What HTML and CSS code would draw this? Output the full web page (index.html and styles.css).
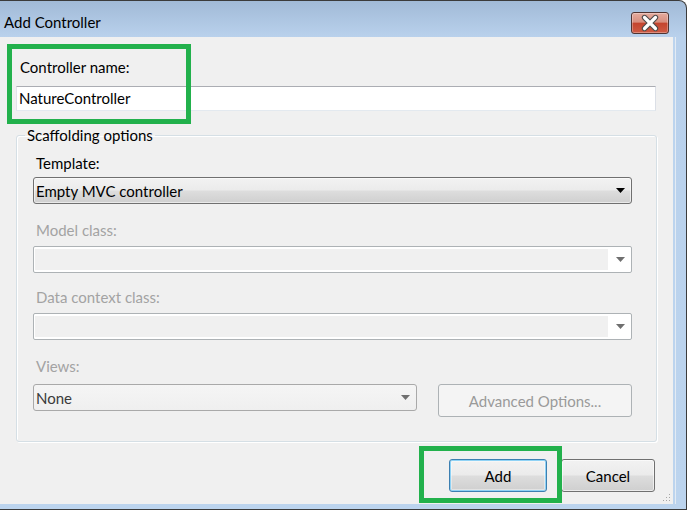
FILE: index.html
```html
<!DOCTYPE html>
<html lang="en">
<head>
<meta charset="utf-8">
<title>Add Controller</title>
<link rel="stylesheet" href="styles.css">
</head>
<body>
<div class="window">
  <div class="titlebar">
    <span class="title">Add Controller</span>
    <div class="close" role="button" aria-label="Close">
      <svg width="36" height="20" viewBox="0 0 36 20">
        <path d="M12.5 4.5 L23.5 15.5 M23.5 4.5 L12.5 15.5" stroke="#4a4a4a" stroke-width="5.4" stroke-linecap="round" fill="none"/>
        <path d="M12.5 4.5 L23.5 15.5 M23.5 4.5 L12.5 15.5" stroke="#ffffff" stroke-width="3.2" stroke-linecap="round" fill="none"/>
      </svg>
    </div>
  </div>
  <div class="client">
    <div class="lbl name-lbl">Controller name:</div>
    <div class="textbox">NatureController</div>
    <fieldset class="group">
      <legend>Scaffolding options</legend>
      <div class="lbl first">Template:</div>
      <div class="combo active">
        <span class="val">Empty MVC controller</span>
        <svg class="arrow" width="9" height="5" viewBox="0 0 9 5"><path d="M0 0H9L4.5 5Z" fill="#000"/></svg>
      </div>
      <div class="lbl dis sec">Model class:</div>
      <div class="combo disabled">
        <span class="field"></span>
        <span class="dbtn"><svg width="9" height="5" viewBox="0 0 9 5"><path d="M0 0H9L4.5 5Z" fill="#6f6f6f"/></svg></span>
      </div>
      <div class="lbl dis third">Data context class:</div>
      <div class="combo disabled">
        <span class="field"></span>
        <span class="dbtn"><svg width="9" height="5" viewBox="0 0 9 5"><path d="M0 0H9L4.5 5Z" fill="#6f6f6f"/></svg></span>
      </div>
      <div class="lbl dis fourth">Views:</div>
      <div class="views-row">
        <div class="combo views">
          <span class="val">None</span>
          <svg class="arrow" width="9" height="5" viewBox="0 0 9 5"><path d="M0 0H9L4.5 5Z" fill="#6f6f6f"/></svg>
        </div>
        <div class="btn adv">Advanced Options...</div>
      </div>
    </fieldset>
    <div class="actions">
      <div class="btn default">Add</div>
      <div class="btn">Cancel</div>
    </div>
    <svg class="grip" width="10" height="10" viewBox="0 0 10 10">
      <rect x="8" y="2" width="1" height="1" fill="#a6a6a6"/>
      <rect x="5" y="5" width="1" height="1" fill="#a6a6a6"/>
      <rect x="8" y="5" width="1" height="1" fill="#a6a6a6"/>
      <rect x="2" y="8" width="1" height="1" fill="#a6a6a6"/>
      <rect x="5" y="8" width="1" height="1" fill="#a6a6a6"/>
      <rect x="8" y="8" width="1" height="1" fill="#a6a6a6"/>
    </svg>
  </div>
  <div class="mark mark-name"></div>
  <div class="mark mark-add"></div>
</div>
</body>
</html>
```
FILE: styles.css
```css
* { box-sizing: border-box; }
html, body { margin: 0; padding: 0; }
body {
  width: 687px;
  height: 510px;
  overflow: hidden;
  background: #ffffff;
  font-family: Lato, "Noto Sans", sans-serif;
  font-size: 15px;
  line-height: 18px;
  color: #000;
}
.window {
  position: relative;
  width: 687px;
  height: 510px;
  display: flex;
  flex-direction: column;
  background: linear-gradient(to bottom, #a1bad7 0px, #b9d1ec 36px, #bcd4ee 100%);
  border-top: 1px solid #3b3b3b;
  border-right: 1px solid #3b3b3b;
  border-bottom: 1px solid #3b3b3b;
  border-top-right-radius: 8px;
  padding: 0 13px 5px 0;
}
.titlebar {
  height: 36px;
  flex: none;
  display: flex;
  justify-content: space-between;
  align-items: flex-start;
  padding: 0 4px 0 4px;
}
.title {
  margin-top: 12px;
  color: #000;
}
.close {
  margin-top: 11px;
  width: 38px;
  height: 22px;
  border: 1px solid #4f3432;
  border-radius: 3px;
  background: linear-gradient(to bottom, #e4ab9e 0%, #d88e7e 45%, #c4452f 52%, #cf5b44 100%);
  box-shadow: inset 0 0 0 1px rgba(255, 255, 255, 0.3);
  display: flex;
  align-items: center;
  justify-content: center;
}
.close svg { display: block; }
.client {
  position: relative;
  flex: 1;
  background: #f0f0f0;
  padding: 21px 16px 0 16px;
  box-shadow: 2px 0 0 #bcd4ee, 3px 0 0 #e3ebf4;
}
.lbl { padding-left: 4px; }
.textbox {
  margin-top: 10px;
  width: 640px;
  height: 25px;
  border: 1px solid;
  border-color: #abadb3 #dbdfe6 #e3e9ef #e2e3ea;
  background: #fff;
  padding-left: 2px;
  line-height: 23px;
}
.group {
  margin: 15px 0 0 0;
  min-width: 0;
  border: 1px solid #d5dfe5;
  border-radius: 3px;
  box-shadow: inset 1px 1px 0 #fff, 1px 1px 0 #fff;
  padding: 0 16px 24px 16px;
}
.group legend {
  margin-left: -8px;
  padding: 0 2px;
}
.group .lbl { padding-left: 3px; }
.lbl.first { margin-top: 10px; margin-bottom: 5px; }
.lbl.sec { margin-top: 17px; margin-bottom: 7px; }
.lbl.third { margin-top: 15px; margin-bottom: 7px; }
.lbl.fourth { margin-top: 17px; margin-bottom: 9px; }
.lbl.dis { color: #a3a3a3; }
.combo {
  width: 599px;
  height: 27px;
  display: flex;
  align-items: center;
}
.combo.active {
  border: 1px solid #707070;
  border-radius: 3px;
  background: linear-gradient(to bottom, #f2f2f2 0%, #ebebeb 48%, #dddddd 52%, #cfcfcf 100%);
  box-shadow: inset 0 0 0 1px rgba(255, 255, 255, 0.55);
  padding: 0 6px 0 2px;
}
.combo .val { flex: 1; }
.combo .arrow { display: block; flex: none; }
.combo.disabled {
  border: 1px solid #adb2b5;
  border-radius: 2px;
  background: #fff;
  padding: 2px 0 2px 1px;
  align-items: stretch;
}
.combo.disabled .field {
  flex: 1;
  background: #f0f0f0;
}
.combo.disabled .dbtn {
  width: 23px;
  flex: none;
  display: flex;
  align-items: center;
  justify-content: center;
}
.combo.disabled .dbtn svg { display: block; margin-left: 2px; }
.views-row {
  display: flex;
  align-items: flex-start;
  gap: 21px;
}
.combo.views {
  width: 384px;
  border: 1px solid #a9a9a9;
  border-radius: 3px;
  background: linear-gradient(to bottom, #f5f5f5 0%, #efefef 100%);
  padding: 0 6px 0 2px;
  color: #3a3a3a;
}
.btn {
  height: 33px;
  display: flex;
  align-items: center;
  justify-content: center;
  border: 1px solid #707070;
  border-radius: 3px;
  background: linear-gradient(to bottom, #f2f2f2 0%, #ebebeb 48%, #dddddd 52%, #cfcfcf 100%);
  box-shadow: inset 0 0 0 1px rgba(255, 255, 255, 0.6);
}
.btn.adv {
  width: 194px;
  border-color: #adb2b5;
  background: #f4f4f4;
  box-shadow: none;
  color: #9a9a9a;
}
.actions {
  display: flex;
  justify-content: flex-end;
  gap: 14px;
  margin-top: 17px;
  padding-right: 2px;
}
.actions .btn { width: 94px; }
.actions .btn.default {
  width: 98px;
  border-color: #3c7fb1;
  box-shadow: inset 0 0 0 1px #8fd2f5, inset 0 0 0 2px rgba(255, 255, 255, 0.4);
}
.grip {
  position: absolute;
  right: 2px;
  bottom: 2px;
  display: block;
}
.mark {
  position: absolute;
  border: 5px solid #22b14c;
  pointer-events: none;
}
.mark-name { left: 7px; top: 43px; width: 184px; height: 80px; }
.mark-add { left: 419px; top: 445px; width: 143px; height: 57px; }
```
